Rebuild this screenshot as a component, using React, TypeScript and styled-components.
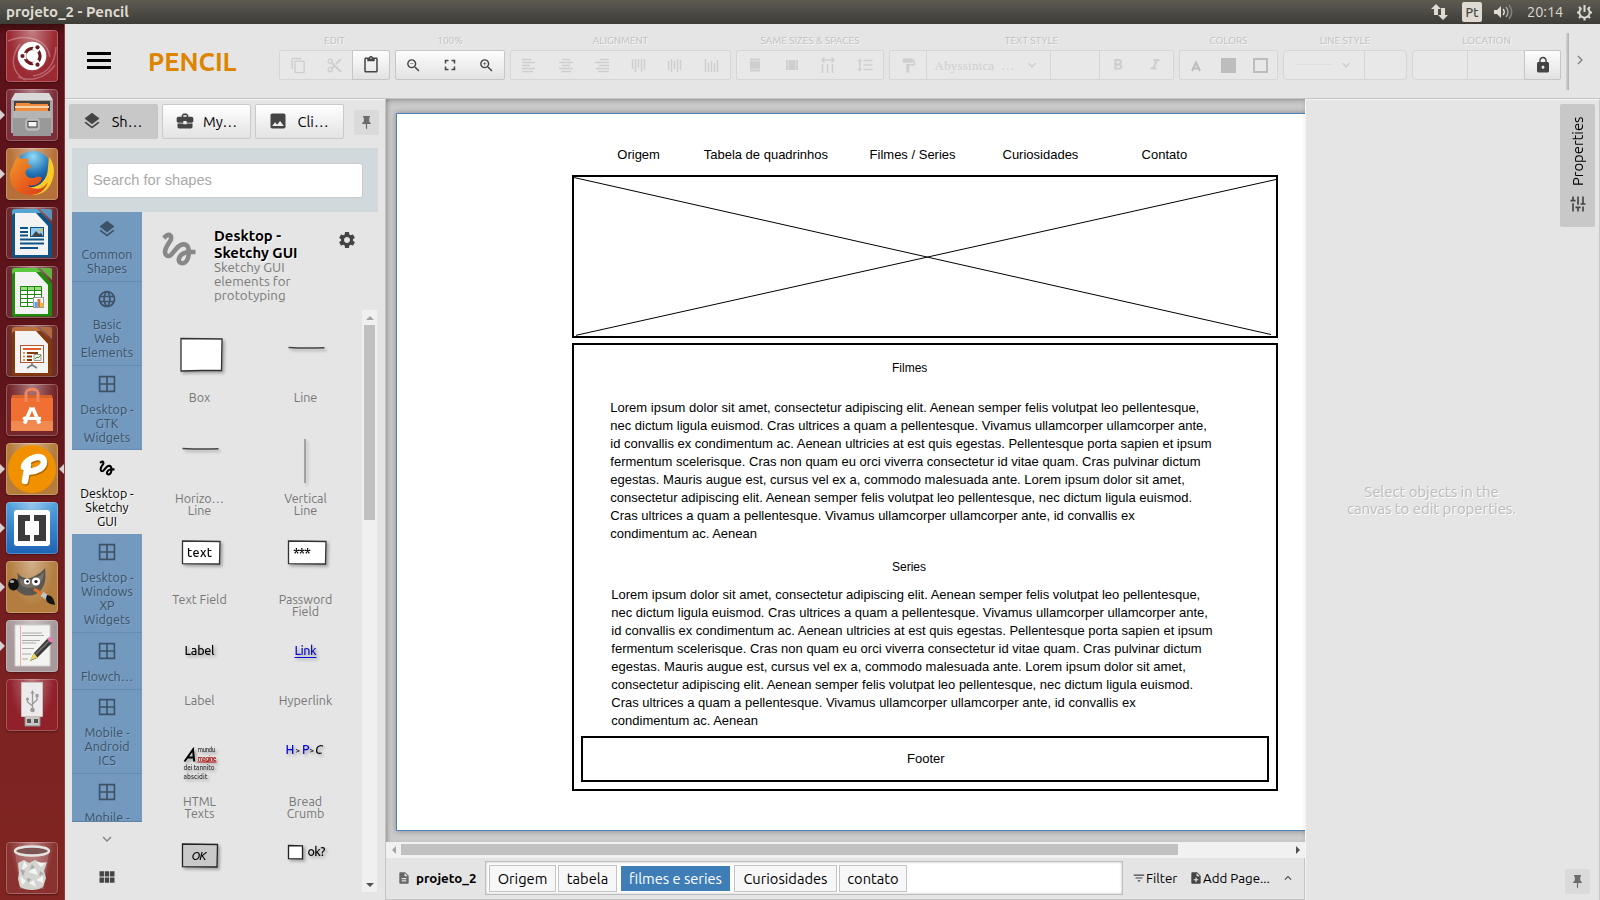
import React from 'react';
import styled, { createGlobalStyle, css } from 'styled-components';
import {
  MdBusinessCenter,
  MdChevronRight,
  MdContentCopy,
  MdContentCut,
  MdContentPaste,
  MdDescription,
  MdExpandLess,
  MdExpandMore,
  MdFilterList,
  MdFormatBold,
  MdFormatItalic,
  MdFormatLineSpacing,
  MdFormatPaint,
  MdFullscreen,
  MdGesture,
  MdLanguage,
  MdLayers,
  MdLock,
  MdNoteAdd,
  MdPhoto,
  MdSettings,
  MdTune,
  MdViewModule,
  MdZoomIn,
  MdZoomOut,
} from 'react-icons/md';

const UI = '"Ubuntu", "Noto Sans", "Open Sans", sans-serif';
const SANS = '"Liberation Sans", Arial, sans-serif';

const GlobalStyle = createGlobalStyle`
  * { box-sizing: border-box; }
  body { margin: 0; overflow: hidden; background: #e5e5e5; font-family: ${UI}; }
  svg { display: block; flex: none; }
`;

const Screen = styled.div`
  width: 1600px;
  height: 900px;
  display: flex;
  flex-direction: column;
  overflow: hidden;
`;

/* ---------- system bar ---------- */

const SystemBar = styled.header`
  height: 24px;
  flex: none;
  display: flex;
  align-items: center;
  justify-content: space-between;
  padding: 0 7px 0 6px;
  color: #dfdbd2;
  background: linear-gradient(#5d5a4c 0, #59574f 3px, #3d3c37 100%);
`;

const WindowTitle = styled.div`
  font-size: 15px;
  font-weight: 700;
  line-height: 24px;
`;

const Indicators = styled.div`
  display: flex;
  align-items: center;
`;

const Keyboard = styled.div`
  width: 20px;
  height: 20px;
  margin: 0 12px 0 14px;
  border-radius: 2px;
  background: #dfdbd2;
  color: #45443e;
  font-size: 12.5px;
  font-weight: 500;
  line-height: 21px;
  text-align: center;
`;

const Clock = styled.div`
  margin: 0 12px 0 13px;
  width: 37px;
  font-size: 14.5px;
  line-height: 24px;
`;

/* ---------- launcher ---------- */

const Desktop = styled.div`
  flex: 1;
  display: flex;
  min-height: 0;
`;

const Launcher = styled.nav`
  width: 65px;
  flex: none;
  display: flex;
  flex-direction: column;
  gap: 7px;
  padding: 6px 0 6px 6px;
  border-right: 1px solid #8d3a3c;
  background: linear-gradient(#3a0d10 0, #5c1218 10px, #5e141a 40%, #7c2222 75%, #802521 100%);
`;

const Tile = styled.div<{ $bg: string; $last?: boolean }>`
  position: relative;
  width: 52px;
  height: 52px;
  flex: none;
  border-radius: 4px;
  background: radial-gradient(ellipse at 50% 0, rgba(255, 255, 255, 0.4), rgba(255, 255, 255, 0) 62%), ${(p) => p.$bg};
  box-shadow: inset 0 0 0 1px rgba(255, 255, 255, 0.24), 0 1px 2px rgba(0, 0, 0, 0.35);
  ${(p) => p.$last && css`margin-top: auto;`}
`;

const RunningMark = styled.i<{ $right?: boolean }>`
  position: absolute;
  top: 21px;
  border: 5px solid transparent;
  ${(p) =>
    p.$right
      ? css`right: -6px; border-left: 0; border-right-color: #d8d0d0;`
      : css`left: -6px; border-right: 0; border-left-color: #d8d0d0;`}
`;

/* ---------- application header ---------- */

const AppWindow = styled.div`
  flex: 1;
  min-width: 0;
  display: flex;
  flex-direction: column;
  background: #e5e5e5;
`;

const AppHeader = styled.div`
  height: 75px;
  flex: none;
  display: flex;
  border-bottom: 1px solid #c3c3c3;
`;

const Burger = styled.button`
  width: 24px;
  height: 17px;
  margin: 28px 0 0 22px;
  padding: 0;
  border: 0;
  display: flex;
  flex-direction: column;
  justify-content: space-between;
  background: none;
  span { height: 3px; background: #000; }
`;

const Brand = styled.div`
  width: 168px;
  padding: 20px 0 0 37px;
  color: #dd8500;
  font-size: 25.6px;
  font-weight: 700;
  line-height: 36px;
`;

const Tools = styled.div`
  display: flex;
  gap: 5px;
  padding-top: 9px;
`;

const Tool = styled.section`
  display: flex;
  flex-direction: column;
`;

const ToolLabel = styled.div`
  height: 17px;
  color: #c0c0c0;
  font-size: 10.1px;
  line-height: 15px;
  text-align: center;
  text-shadow: 1px 1px 0 #f6f6f6;
`;

const ToolBox = styled.div<{ $active?: boolean; $w: number; $round?: boolean }>`
  display: flex;
  width: ${(p) => p.$w}px;
  height: 30px;
  border: 1px solid ${(p) => (p.$active ? '#c6c6c6' : '#d6d6d6')};
  border-radius: ${(p) => (p.$round ? 4 : 2)}px;
  background: ${(p) => (p.$active ? 'linear-gradient(#fdfdfd, #e2e2e2)' : '#e8e8e8')};
`;

const ToolCell = styled.div<{ $w?: number; $tone?: string; $raised?: boolean; $line?: boolean }>`
  flex: ${(p) => (p.$w ? 'none' : 1)};
  width: ${(p) => (p.$w ? p.$w + 'px' : 'auto')};
  display: flex;
  align-items: center;
  justify-content: center;
  color: ${(p) => p.$tone || '#cecece'};
  ${(p) => p.$line && css`border-right: 1px solid #d6d6d6;`}
  ${(p) =>
    p.$raised &&
    css`
      margin: -1px -1px -1px 0;
      border: 1px solid #c6c6c6;
      border-radius: 0 2px 2px 0;
      background: linear-gradient(#fdfdfd, #e2e2e2);
      color: #444;
    `}
`;

const FontName = styled.div`
  flex: 1;
  padding: 2px 0 0 8px;
  font-family: "Liberation Serif", serif;
  font-size: 13px;
  letter-spacing: 0.2px;
  white-space: pre;
`;

const ScrollEdge = styled.div`
  width: 3px;
  height: 57px;
  margin: 9px 0 0 5px;
  background: linear-gradient(90deg, #d4d4d4, #b0b0b0);
`;

const ScrollNext = styled.div`
  width: 24px;
  padding: 27px 0 0 2px;
  color: #888;
`;

/* ---------- left panel ---------- */

const Workspace = styled.div`
  flex: 1;
  min-height: 0;
  display: flex;
`;

const Shapes = styled.aside`
  width: 321px;
  flex: none;
  display: flex;
  flex-direction: column;
  border-top: 1px solid #f6f6f6;
  border-right: 1px solid #c4c4c4;
`;

const PanelTabs = styled.div`
  display: flex;
  align-items: flex-start;
  gap: 4px;
  height: 48px;
  padding: 4px 0 0 4px;
`;

const PanelTab = styled.button<{ $on?: boolean }>`
  width: 89px;
  height: 35px;
  display: flex;
  align-items: center;
  gap: 3px;
  padding: 0 0 1px 12px;
  border: 1px solid ${(p) => (p.$on ? '#c6c6c6' : '#cacaca')};
  border-radius: 2px;
  background: ${(p) => (p.$on ? '#c8c8c8' : 'linear-gradient(#fff, #e3e3e3)')};
  color: #444;
  span {
    width: 44px;
    color: #000;
    font: 14.67px ${UI};
    text-align: center;
  }
`;

const PinButton = styled.div<{ $x?: number }>`
  width: 25px;
  height: 25px;
  margin: ${(p) => (p.$x ? '6px 0 0 6px' : '0')};
  display: grid;
  place-items: center;
  border-radius: 2px;
  background: #dadada;
`;

const SearchBand = styled.div`
  height: 64px;
  margin: 0 7px;
  padding: 15px 15px 0;
  background: #d2d9dc;
`;

const SearchField = styled.div`
  height: 35px;
  padding-left: 5px;
  border: 1px solid #cbcbcb;
  border-radius: 3px;
  background: #fff;
  color: #aaa;
  font: 14.67px/33px ${SANS};
`;

const ShapeBrowser = styled.div`
  flex: 1;
  min-height: 0;
  display: flex;
  padding-left: 7px;
`;

const Collections = styled.div`
  width: 70px;
  flex: none;
  display: flex;
  flex-direction: column;
`;

const CollectionList = styled.div`
  height: 610px;
  flex: none;
  overflow: hidden;
  border-bottom: 1px solid #5f84a8;
  background: #7399bf;
`;

const CollectionItem = styled.div<{ $h: number; $pad: number; $on?: boolean }>`
  height: ${(p) => p.$h}px;
  padding-top: ${(p) => p.$pad}px;
  display: flex;
  flex-direction: column;
  align-items: center;
  gap: 8px;
  border-bottom: 1px solid ${(p) => (p.$on ? '#e5e5e5' : '#658cb3')};
  background: ${(p) => (p.$on ? '#e5e5e5' : 'transparent')};
  color: ${(p) => (p.$on ? '#000' : '#3d5266')};
  text-shadow: ${(p) => (p.$on ? '1px 1px 0 #fff' : '1px 1px 0 #83a5c6')};
`;

const CollectionName = styled.div`
  font-size: 12.5px;
  line-height: 14px;
  text-align: center;
  white-space: pre;
`;

const CollectionTools = styled.div`
  height: 78px;
  display: flex;
  flex-direction: column;
  align-items: center;
  gap: 19px;
  padding-top: 8px;
  color: #444;
`;

const Stencils = styled.div`
  flex: 1;
  display: flex;
  flex-direction: column;
`;

const StencilHeader = styled.div`
  height: 98px;
  display: flex;
  padding: 15px 0 0 15px;
`;

const StencilInfo = styled.div`
  width: 118px;
  margin: 0 5px 0 13px;
  h3 {
    margin: 0;
    font-size: 14.9px;
    font-weight: 700;
    line-height: 17px;
    text-shadow: 1px 1px 0 #fff;
    white-space: pre;
  }
  p {
    margin: 0;
    color: #7a7a7a;
    font-size: 13.33px;
    line-height: 14px;
    white-space: pre;
  }
`;

const SettingsIcon = styled(MdSettings)`
  margin-top: 3px;
  color: #444;
`;

const StencilBody = styled.div`
  height: 582px;
  display: flex;
`;

const StencilGrid = styled.div`
  width: 220px;
  padding: 21px 0 0 4px;
  display: grid;
  grid-template-columns: 106px 106px;
  grid-auto-rows: 101px;
  overflow: hidden;
`;

const Stencil = styled.figure`
  margin: 0;
  figcaption {
    margin-top: 5px;
    padding-left: 1px;
    color: #777;
    font-size: 12.5px;
    line-height: 12px;
    text-align: center;
    white-space: pre;
  }
`;

const StencilArt = styled.svg`
  filter: drop-shadow(2px 2px 1.5px rgba(0, 0, 0, 0.3));
  text {
    font-family: "Comic Sans MS", ${UI};
    font-weight: 500;
  }
`;

const VScroll = styled.div`
  width: 15px;
  display: flex;
  flex-direction: column;
  align-items: center;
  justify-content: space-between;
  background: #f0f0f0;
`;

const VThumb = styled.div`
  width: 11px;
  height: 195px;
  margin-bottom: auto;
  background: #c0c0c0;
`;

const ArrowSlot = styled.div`
  width: 15px;
  height: 15px;
  display: grid;
  place-items: center;
`;

/* ---------- canvas ---------- */

const Editor = styled.main`
  width: 919px;
  flex: none;
  display: flex;
  flex-direction: column;
`;

const Viewport = styled.div`
  position: relative;
  height: 743px;
  padding: 14px 0 0 10px;
  overflow: hidden;
  background: #cbcbcb;
  &::after {
    content: '';
    position: absolute;
    inset: 0;
    pointer-events: none;
    box-shadow: inset 0 4px 6px -3px rgba(0, 0, 0, 0.3), inset 4px 0 5px -3px rgba(0, 0, 0, 0.25);
  }
`;

const Page = styled.div`
  position: relative;
  width: 1000px;
  height: 718px;
  border: 1px solid #4c84ba;
  background: #fff;
  box-shadow: 0 0 6px rgba(0, 0, 0, 0.35);
  font-family: ${SANS};
  color: #000;
`;

const CanvasText = styled.div<{ $x: number; $y: number; $size?: number; $leading?: number }>`
  position: absolute;
  left: ${(p) => p.$x - 397}px;
  top: ${(p) => p.$y - 114}px;
  font-size: ${(p) => p.$size || 13}px;
  line-height: ${(p) => p.$leading || 18}px;
  white-space: pre;
`;

const Frame = styled.div<{ $x: number; $y: number; $w: number; $h: number }>`
  position: absolute;
  left: ${(p) => p.$x - 397}px;
  top: ${(p) => p.$y - 114}px;
  width: ${(p) => p.$w}px;
  height: ${(p) => p.$h}px;
  border: 2px solid #000;
`;

const HScroll = styled.div`
  height: 16px;
  display: flex;
  align-items: center;
  justify-content: space-between;
  padding-bottom: 1px;
  background: #f1f1f1;
`;

const HThumb = styled.div`
  width: 777px;
  height: 11px;
  margin-right: auto;
  background: #c1c1c1;
`;

const PageBar = styled.div`
  flex: 1;
  display: flex;
  align-items: center;
  padding: 0 0 1px 11px;
  border-right: 1px solid #c4c4c4;
  border-bottom: 1px solid #c4c4c4;
  background: #e4e4e4;
  color: #000;
`;

const DocumentName = styled.div`
  width: 69px;
  margin-left: 5px;
  font-size: 13.33px;
  font-weight: 700;
`;

const PageTabs = styled.div`
  width: 638px;
  height: 34px;
  display: flex;
  gap: 2px;
  padding: 3px;
  border: 1px solid #bdbdbd;
  background: #fff;
  box-shadow: inset 0 0 3px rgba(0, 0, 0, 0.25);
`;

const PageTab = styled.div<{ $w: number; $on?: boolean }>`
  width: ${(p) => p.$w}px;
  height: ${(p) => (p.$on ? 25 : 27)}px;
  margin: ${(p) => (p.$on ? '1px 2px 0' : '0')};
  border: 1px solid ${(p) => (p.$on ? '#3f7db7' : '#c4c4c4')};
  background: ${(p) => (p.$on ? '#3f7db7' : '#f7f7f7')};
  color: ${(p) => (p.$on ? '#fff' : '#000')};
  font-size: 14.67px;
  line-height: ${(p) => (p.$on ? 23 : 25)}px;
  text-align: center;
  white-space: nowrap;
`;

const PageAction = styled.div<{ $w: number; $left: number }>`
  width: ${(p) => p.$w}px;
  margin-left: ${(p) => p.$left}px;
  display: flex;
  align-items: center;
  font-size: 13.33px;
  white-space: nowrap;
  svg { color: #444; }
`;

/* ---------- properties ---------- */

const Properties = styled.aside`
  flex: 1;
  display: flex;
  justify-content: space-between;
  border-top: 1px solid #f6f6f6;
  border-left: 1px solid #f4f4f4;
  border-right: 1px solid #c8c8c8;
`;

const EmptyHint = styled.p`
  width: 251px;
  margin: 0;
  padding-top: 383px;
  color: #bcbcbc;
  font-size: 14.9px;
  line-height: 17px;
  text-align: center;
  text-shadow: 1px 1px 0 #fff;
  white-space: pre;
`;

const PropertiesRail = styled.div`
  width: 35px;
  margin: 4px 4px 6px 0;
  display: flex;
  flex-direction: column;
  align-items: center;
  justify-content: space-between;
`;

const PropertiesTab = styled.div`
  width: 35px;
  height: 123px;
  display: flex;
  flex-direction: column;
  align-items: center;
  gap: 8px;
  padding-top: 11px;
  border-radius: 2px;
  background: #c8c8c8;
  color: #444;
  span {
    height: 71px;
    writing-mode: vertical-rl;
    transform: rotate(180deg);
    color: #000;
    font-size: 14.8px;
    line-height: 20px;
    white-space: nowrap;
  }
  svg { transform: rotate(-90deg); }
`;

/* ---------- drawings ---------- */

const Pin = () => (
  <svg width="11" height="15" viewBox="0 0 11 15">
    <path d="M2 1h7v1.4H8.2V6.5L9.8 8v1H6.1v4.3L5.5 14.4 4.9 13.3V9H1.2V8L2.8 6.5V2.4H2z" fill="#6c6c6c" />
  </svg>
);

const Windows = () => (
  <svg width="20" height="20" viewBox="0 0 20 20" fill="none" stroke="currentColor" strokeWidth="1.6">
    <path d="M2.6 2.6h14.8v14.8H2.6zM10 2.6v14.8M2.6 10h14.8" />
  </svg>
);

const Triangle = ({ d, tone = '#505050' }: { d: string; tone?: string }) => (
  <svg width="8" height="8" viewBox="0 0 8 8">
    <path d={d} fill={tone} />
  </svg>
);

const Bars = ({ d, w = 1.4 }: { d: string; w?: number }) => (
  <svg width="16" height="16" viewBox="0 0 16 16" fill="none" stroke="currentColor" strokeWidth={w}>
    <path d={d} />
  </svg>
);

const alignments = [
  'M1 2.500h9M1 5.500h13M1 8.500h8M1 11.500h13M1 14.500h11',
  'M4 2.500h8M1 5.500h14M4 8.500h8M1 11.500h14M3 14.500h10',
  'M6 2.500h9M1 5.500h14M5 8.500h10M2 11.500h13M4 14.500h11',
  'M1.5 2v10M4.500 2v13M7.500 2v9M10.500 2v13M13.500 2v11',
  'M1.500 4v9M4.500 2v13M7.500 4v8M10.500 2v13M13.500 3v10',
  'M1.500 2v13M4.500 6v9M7.500 4v11M10.500 6v9M13.500 3v12',
];

const sheet = (dark: string, mid: string, inner: React.ReactNode) => (
  <svg width="52" height="52" viewBox="0 0 52 52">
    <path d="M9 2h22l15 15v32a1.500 1.500 0 0 1-1.500 1.500h-34A3 3 0 0 1 6 47V5a3 3 0 0 1 3-3z" fill={dark} />
    <path d="M6 8V5a3 3 0 0 1 3-3h22l4 4H9z" fill={mid} />
    <path d="M34 2h10a2 2 0 0 1 2 2v10z" fill={mid} opacity=".85" />
    <path d="M9 6h21l12 13v29H9z" fill="#f3f3f3" />
    {inner}
  </svg>
);

const launcherIcons: { bg: string; run?: boolean; focus?: boolean; art: React.ReactNode }[] = [
  {
    bg: '#9c2a33',
    art: (
      <svg width="52" height="52" viewBox="0 0 52 52">
        <g fill="none" stroke="#fff" strokeOpacity=".28" strokeWidth="1.500">
          <path d="M2 11C20 3 41 9 44 27M50 17c-1 16-8 27-23 29M19 50C5 42 4 27 14 14M12 47c16 6 29-1 37-12" />
        </g>
        <circle cx="26" cy="26" r="14.300" fill="#fff" />
        <circle cx="26.500" cy="26" r="7.600" fill="none" stroke="#6e1a1f" strokeWidth="3.200" />
        <path d="M20.500 26h-5M29 21l3-5M29 31l3 5" stroke="#fff" strokeWidth="6.500" />
        <g fill="#6e1a1f">
          <circle cx="16.500" cy="26" r="2.100" />
          <circle cx="31.500" cy="17.300" r="2.100" />
          <circle cx="31.500" cy="34.700" r="2.100" />
        </g>
      </svg>
    ),
  },
  {
    bg: '#7c2f3a',
    run: true,
    art: (
      <svg width="52" height="52" viewBox="0 0 52 52">
        <path d="M9 4h34l4 7v33H5V11z" fill="#d9d9d9" />
        <path d="M5 11h42v33H5z" fill="#a9a9a9" />
        <path d="M8 12h36v10H8z" fill="#46433f" />
        <path d="M10 14h13l2 1h17v7H9z" fill="#f08a3c" />
        <path d="M9 17h34v2H9z" fill="#fcd3a8" />
        <path d="M7 22h38v25H7z" fill="#999" />
        <path d="M7 22h38v7H7z" fill="#b5b5b5" />
        <rect x="20" y="30" width="13" height="11" rx="2" fill="#aaa" stroke="#ccc" />
        <rect x="22" y="32.500" width="9" height="5.500" fill="#f4f4f4" stroke="#444" />
      </svg>
    ),
  },
  {
    bg: '#b6703a',
    run: true,
    art: (
      <svg width="52" height="52" viewBox="0 0 52 52">
        <defs>
          <radialGradient id="globe" cx=".5" cy=".15" r=".9">
            <stop offset="0" stopColor="#8edbf5" />
            <stop offset=".5" stopColor="#2373b5" />
            <stop offset="1" stopColor="#0d2c66" />
          </radialGradient>
          <linearGradient id="fox" x1="0" y1="0" x2="1" y2="1">
            <stop offset="0" stopColor="#f39a2b" />
            <stop offset=".6" stopColor="#e65b1c" />
            <stop offset="1" stopColor="#d4381a" />
          </linearGradient>
        </defs>
        <circle cx="27" cy="22" r="19" fill="url(#globe)" />
        <path d="M43 9c5 6 6 14 4 21C44 41 37 47 26 47l-6-8c13 2 22-7 22-20z" fill="#fbc928" />
        <path d="M12 8c1 2 3 3 5 3 3-1 5 0 6 1-2 1-2 4 0 5 2 0 3 0 2 2l-5 3c-2 5 2 9 8 8 3-1 5-2 8 0-2 7-9 9-14 7 6 6 15 5 20-3-3 9-10 13-18 13C12 47 4 39 4 28c0-7 3-9 4-13 1-3 3-5 4-7z" fill="url(#fox)" />
      </svg>
    ),
  },
  {
    bg: '#6b2a30',
    art: sheet('#0d5486', '#55a5d2', (
      <g>
        <path d="M14 21h8M14 25h8M14 28.500h8M14 32.500h24M14 36.500h24M14 41h18" stroke="#0d5486" strokeWidth="2" />
        <rect x="24.500" y="20.500" width="13" height="9" fill="#8ecbf0" stroke="#0d5486" />
        <path d="M26 29l4-5 3 3 2-1 2 3z" fill="#444" />
        <circle cx="35" cy="23" r="1.500" fill="#ffb52b" />
      </g>
    )),
  },
  {
    bg: '#6b2a30',
    art: sheet('#1f8a0e', '#5cc93f', (
      <g>
        <path d="M14 20h22v21H14z" fill="#fff" />
        <path d="M14 20h22v4H14z" fill="#9be07e" />
        <path d="M14.500 20.500h21v20h-21zM14 24.500h22M14 28.500h22M14 32.500h22M14 36.500h22M21.500 20v21M28.500 20v21" stroke="#1f8a0e" fill="none" />
        <rect x="27.500" y="31.500" width="10" height="10" fill="#fff" stroke="#999" />
        <path d="M28.500 36h3v5h-3z" fill="#45a4f5" />
        <path d="M31.500 33h3v8h-3z" fill="#e0742c" />
        <path d="M34.500 37h3v4h-3z" fill="#f4b631" />
      </g>
    )),
  },
  {
    bg: '#6f2d2a',
    art: sheet('#83380c', '#bb7140', (
      <g>
        <rect x="14.500" y="20.500" width="23" height="17" fill="#fff" stroke="#b4552a" />
        <path d="M17 24h18" stroke="#e55b2c" strokeWidth="2" />
        <path d="M17 28h2M17 31.500h2M17 35h2" stroke="#e98a62" strokeWidth="2" />
        <path d="M21 28h11M21 31.500h5M21 35h5" stroke="#83380c" strokeWidth="2" />
        <path d="M28 29.500h7v6h-7z" fill="#eee" stroke="#999" />
        <path d="M29 34l2-2 1 1 3-3" stroke="#3d9c30" fill="none" />
        <path d="M26 38v2l-5 3M26 40l5 3" stroke="#777" strokeWidth="1.500" fill="none" />
      </g>
    )),
  },
  {
    bg: '#74262b',
    art: (
      <svg width="52" height="52" viewBox="0 0 52 52">
        <path d="M6 11h40l1 6H5z" fill="#d9622b" />
        <path d="M5 14h42v33H5z" fill="#ef7032" />
        <path d="M5 37h42v10H5z" fill="#f18a50" />
        <path d="M20 18V9c0-5 12-5 12 0v9" fill="none" stroke="#f0875c" strokeWidth="3" />
        <g stroke="#fff" fill="none">
          <path d="M18.500 39.500l7-16M33.500 39.500l-7-16" strokeWidth="3.600" />
          <path d="M18 34.500h17" strokeWidth="3.200" />
        </g>
        <circle cx="18.500" cy="34.500" r="2" fill="#fff" />
      </svg>
    ),
  },
  {
    bg: '#b57c3c',
    run: true,
    focus: true,
    art: (
      <svg width="52" height="52" viewBox="0 0 52 52">
        <circle cx="26" cy="26" r="24" fill="#f29100" />
        <g fill="none" strokeWidth="6.500" strokeLinecap="round" strokeLinejoin="round">
          <path d="M22 22c-1.500 6-2 10-3 16M18 24c1-8 19-15 20-5 0 6-8 9-14 9.500" stroke="#7a4c0b" strokeOpacity=".55" transform="translate(1 1.500)" />
          <path d="M22 22c-1.500 6-2 10-3 16M18 24c1-8 19-15 20-5 0 6-8 9-14 9.500" stroke="#fff" />
        </g>
      </svg>
    ),
  },
  {
    bg: 'linear-gradient(#54a3dd, #1d63b5)',
    run: true,
    art: (
      <svg width="52" height="52" viewBox="0 0 52 52">
        <rect x="8" y="8" width="36" height="36" rx="3" fill="#fff" />
        <path d="M12 13h12v6h-5v14h5v6H12zM40 13H28v6h5v14h-5v6h12z" fill="#3c3c3c" />
      </svg>
    ),
  },
  {
    bg: '#b37d3f',
    run: true,
    art: (
      <svg width="52" height="52" viewBox="0 0 52 52">
        <path d="M11 11c3 5 8 7 13 6 6-2 12-6 15-10 2 12-1 22-9 26-9 4-18 0-22-8 3-4 5-8 3-14z" fill="#5b5650" />
        <path d="M14 18c8 3 18 0 24-7-1 10-6 16-15 16-6 0-10-4-9-9z" fill="#77726a" />
        <ellipse cx="7.500" cy="23.500" rx="5.300" ry="6" fill="#111" />
        <ellipse cx="6" cy="20.500" rx="2.200" ry="1.600" fill="#aaa" />
        <circle cx="21" cy="20.500" r="3" fill="#fff" />
        <circle cx="30" cy="20.500" r="4" fill="#fff" />
        <circle cx="21.500" cy="20.500" r="1.300" fill="#111" />
        <circle cx="30" cy="20.500" r="1.600" fill="#111" />
        <path d="M28 28l13 8" stroke="#e2752b" strokeWidth="3" />
        <path d="M36 33l6 4" stroke="#bfc6cc" strokeWidth="5" />
        <path d="M41 34c5 0 7 4 8 10-5-1-9-2-9-7z" fill="#151515" />
      </svg>
    ),
  },
  {
    bg: '#a8999c',
    run: true,
    art: (
      <svg width="52" height="52" viewBox="0 0 52 52">
        <path d="M9 5h35v41H9z" fill="#f3f3f1" stroke="#cfcfcf" />
        <path d="M14.500 6v40" stroke="#f1aaaa" />
        <path d="M16 13h20M16 15.500h22M16 20.500h18M16 23h14M16 28.500h12M16 34h9M16 39h6" stroke="#a9a9a9" />
        <path d="M28 33L42 18l4.500 4.500L31 38l-7 3z" fill="#3a3a3a" />
        <path d="M30 34L44 20" stroke="#777" strokeWidth="1.500" />
        <path d="M41 19l2.500-2.500 4 4L45 23z" fill="#e77fb5" />
        <path d="M28 33l3.500 4.500-7.500 3z" fill="#ead45a" />
      </svg>
    ),
  },
  {
    bg: '#90202a',
    art: (
      <svg width="52" height="52" viewBox="0 0 52 52">
        <path d="M19 36h15v11H19z" fill="#c9c6c4" stroke="#888" />
        <path d="M21 40h4v4h-4zM28 40h4v4h-4z" fill="#555" />
        <path d="M15.500 3.500h21v34h-21z" fill="#eceaea" stroke="#c4c1c0" />
        <g stroke="#999" fill="none" strokeWidth="1.300">
          <path d="M26.500 13v17M26.500 27l-5-4v-3M26.500 25l4.500-4v-4" />
        </g>
        <g fill="#999">
          <circle cx="26.500" cy="31" r="2.300" />
          <path d="M24.500 14.500l2-3.500 2 3.500zM29.500 15h3v3h-3z" />
          <circle cx="21.500" cy="20" r="1.500" />
        </g>
      </svg>
    ),
  },
];

const Trash = () => (
  <svg width="52" height="52" viewBox="0 0 52 52">
    <path d="M9 10h34l-5 37H14z" fill="#fff" fillOpacity=".14" />
    <path d="M12 21l6-3 5 3 6-3 6 3 6-1-3 9 2 7-3 9c-5 4-17 4-23 0l-2-8 1-6z" fill="#d4d4d0" />
    <path d="M18 19l4 5-6 4zM30 20l5 5 4-4zM22 30l7-4 3 7zM14 34l6 5-4 4zM30 38l7-4v7zM23 41l5-3 2 7z" fill="#f4f4f2" />
    <path d="M14 27l5 2-2 5zM26 22l3 4-5 1zM34 29l4 3-5 2zM21 36l4 1-3 4z" fill="#a9a9a5" />
    <ellipse cx="26" cy="9" rx="17" ry="4.500" fill="#7d5552" stroke="#e4e4e0" strokeWidth="2.600" />
  </svg>
);

/* ---------- data ---------- */

const collections = [
  { h: 70, pad: 7, icon: <MdLayers size={20} />, name: 'Common\nShapes' },
  { h: 84, pad: 7, icon: <MdLanguage size={20} />, name: 'Basic\nWeb\nElements' },
  { h: 84, pad: 8, icon: <Windows />, name: 'Desktop -\nGTK\nWidgets' },
  { h: 84, pad: 8, icon: <MdGesture size={20} />, name: 'Desktop -\nSketchy\nGUI', on: true },
  { h: 99, pad: 8, icon: <Windows />, name: 'Desktop -\nWindows\nXP\nWidgets' },
  { h: 57, pad: 8, icon: <Windows />, name: 'Flowch…' },
  { h: 84, pad: 7, icon: <Windows />, name: 'Mobile -\nAndroid\nICS' },
  { h: 84, pad: 8, icon: <Windows />, name: 'Mobile -' },
];

const field = 'M36.500 8l37.500.5-.5 22.500-37-.3z';

const stencils: { name: string; art: React.ReactNode }[] = [
  { name: 'Box', art: <path d="M35 7.500l41 .5-.5 31.500L55 39.500l-20 .5z" fill="#fff" stroke="#333" strokeWidth="1.300" /> },
  { name: 'Line', art: <path d="M36.500 16.500q18 1 36 .2" fill="none" stroke="#444" strokeWidth="1.500" /> },
  { name: 'Horizo…\nLine', art: <path d="M36.500 16.500q18 1 36 .2" fill="none" stroke="#444" strokeWidth="1.500" /> },
  { name: 'Vertical\nLine', art: <path d="M53 7v44" stroke="#666" /> },
  {
    name: 'Text Field',
    art: (
      <>
        <path d={field} fill="#fff" stroke="#333" strokeWidth="1.300" />
        <text x="41" y="24" fontSize="12.500" textLength="25">text</text>
      </>
    ),
  },
  {
    name: 'Password\nField',
    art: (
      <>
        <path d={field} fill="#fff" stroke="#333" strokeWidth="1.300" />
        <text x="41" y="25" fontSize="14" textLength="18">***</text>
      </>
    ),
  },
  { name: 'Label', art: <text x="38.500" y="21" fontSize="12.500" textLength="30">Label</text> },
  {
    name: 'Hyperlink',
    art: (
      <>
        <text x="42.500" y="21" fontSize="12.500" fill="#0a0ac8" textLength="22">Link</text>
        <path d="M42.500 23.500h22" stroke="#0a0ae0" />
      </>
    ),
  },
  {
    name: 'HTML\nTexts',
    art: (
      <>
        <path d="M38.500 26.500L47 14.500l1.200 12M41 22.500h7" fill="none" stroke="#000" strokeWidth="2" />
        <text x="51.500" y="17" fontSize="6.500" fill="#444" textLength="18">mundu</text>
        <text x="51.500" y="25.500" fontSize="6.500" fill="#a00" textLength="19">magine</text>
        <path d="M51.500 27h19" stroke="#b00" />
        <text x="37.500" y="34.500" fontSize="6.500" fill="#333" textLength="31">dei tannito</text>
        <text x="37.500" y="43.500" fontSize="6.500" fill="#333" textLength="24">abscidit</text>
      </>
    ),
  },
  {
    name: 'Bread\nCrumb',
    art: (
      <>
        <text x="33.500" y="19" fontSize="12.500" fill="#00d">H</text>
        <text x="43.500" y="18" fontSize="8">&gt;</text>
        <text x="50" y="19" fontSize="12.500" fill="#00d">P</text>
        <text x="57.500" y="18" fontSize="8">&gt;</text>
        <text x="63" y="19" fontSize="12.500" fontStyle="italic">C</text>
      </>
    ),
  },
  {
    name: '',
    art: (
      <>
        <path d="M36.500 8l35 .5-.5 22.500-34.500-.3z" fill="#c9c9c9" stroke="#222" strokeWidth="1.300" />
        <text x="45.500" y="24" fontSize="11.500" fontStyle="italic" textLength="15">OK</text>
      </>
    ),
  },
  {
    name: '',
    art: (
      <>
        <path d="M36.500 9.500l14 .3v13l-14-.2z" fill="#fff" stroke="#222" strokeWidth="1.300" />
        <text x="55.500" y="20" fontSize="12.500" textLength="18">ok?</text>
      </>
    ),
  },
];

const loremLines = [
  'Lorem ipsum dolor sit amet, consectetur adipiscing elit. Aenean semper felis volutpat leo pellentesque,',
  'nec dictum ligula euismod. Cras ultrices a quam a pellentesque. Vivamus ullamcorper ullamcorper ante,',
  'id convallis ex condimentum ac. Aenean ultricies at est quis egestas. Pellentesque porta sapien et ipsum',
  'fermentum scelerisque. Cras non quam eu orci viverra consectetur id vitae quam. Cras pulvinar dictum',
  'egestas. Mauris augue est, cursus vel ex a, commodo malesuada ante. Lorem ipsum dolor sit amet,',
  'consectetur adipiscing elit. Aenean semper felis volutpat leo pellentesque, nec dictum ligula euismod.',
  'Cras ultrices a quam a pellentesque. Vivamus ullamcorper ullamcorper ante, id convallis ex',
  'condimentum ac. Aenean',
].join('\n');

/* ---------- regions ---------- */

const TopBar = () => (
  <SystemBar>
    <WindowTitle>projeto_2 - Pencil</WindowTitle>
    <Indicators>
      <svg width="17" height="16" viewBox="0 0 17 16" fill="#dfdbd2">
        <path d="M5 0l5 5H7v6H3V5H0zM12 16l-5-5h3V4h4v7h3z" />
      </svg>
      <Keyboard>Pt</Keyboard>
      <svg width="20" height="16" viewBox="0 0 20 16" fill="none">
        <path d="M0 6h3l4-4v12l-4-4H0z" fill="#dfdbd2" />
        <path d="M9 5q2.500 3 0 6" stroke="#dfdbd2" strokeWidth="1.500" />
        <path d="M12 3q4 5 0 10" stroke="#aaa79f" strokeWidth="1.500" />
        <path d="M15 1q5.500 7 0 14" stroke="#84827a" strokeWidth="1.500" />
      </svg>
      <Clock>20:14</Clock>
      <svg width="17" height="17" viewBox="0 0 17 17" fill="none" stroke="#dfdbd2">
        <path d="M5.500 4.200a5.200 5.200 0 1 0 6 0" strokeWidth="2" />
        <path d="M8.500 1v7M1 8.500h2M14 8.500h2M3 3l1.500 1.500M14 3l-1.500 1.500M3 14l1.500-1.500M14 14l-1.500-1.500M8.500 14v2.500" strokeWidth="2" />
      </svg>
    </Indicators>
  </SystemBar>
);

const Toolbar = () => (
  <AppHeader>
    <Burger aria-label="menu"><span /><span /><span /></Burger>
    <Brand>PENCIL</Brand>
    <Tools>
      <Tool>
        <ToolLabel>EDIT</ToolLabel>
        <ToolBox $w={111}>
          <ToolCell><MdContentCopy size={17} /></ToolCell>
          <ToolCell><MdContentCut size={17} /></ToolCell>
          <ToolCell $raised $w={38}><MdContentPaste size={18} /></ToolCell>
        </ToolBox>
      </Tool>
      <Tool>
        <ToolLabel>100%</ToolLabel>
        <ToolBox $w={110} $active>
          <ToolCell $tone="#444" $w={35}><MdZoomOut size={17} /></ToolCell>
          <ToolCell $tone="#444"><MdFullscreen size={18} /></ToolCell>
          <ToolCell $tone="#444" $w={35}><MdZoomIn size={17} /></ToolCell>
        </ToolBox>
      </Tool>
      <Tool>
        <ToolLabel>ALIGNMENT</ToolLabel>
        <ToolBox $w={221}>
          {alignments.map((d) => (
            <ToolCell key={d}><Bars d={d} /></ToolCell>
          ))}
        </ToolBox>
      </Tool>
      <Tool>
        <ToolLabel>SAME SIZES &amp; SPACES</ToolLabel>
        <ToolBox $w={148}>
          <ToolCell>
            <svg width="16" height="16" viewBox="0 0 16 16" fill="currentColor"><path d="M3 1.500h10v1.500H3zM3 4.500h10v7H3zM3 13h10v1.500H3z" /><path d="M3 3h10v10H3z" opacity=".5" /></svg>
          </ToolCell>
          <ToolCell>
            <svg width="16" height="16" viewBox="0 0 16 16" fill="currentColor"><path d="M2 3h1.500v10H2zM5 3h6v10H5zM12.500 3H14v10h-1.500z" /><path d="M2 3h12v10H2z" opacity=".5" /></svg>
          </ToolCell>
          <ToolCell><Bars d="M2.500 7v9M7.500 7v9M12.500 7v9M2 3h12M4.500 .5L2 3l2.500 2.500M11.500 .5L14 3l-2.500 2.500" /></ToolCell>
          <ToolCell><MdFormatLineSpacing size={18} /></ToolCell>
        </ToolBox>
      </Tool>
      <Tool>
        <ToolLabel>TEXT STYLE</ToolLabel>
        <ToolBox $w={285}>
          <ToolCell $w={37} $line><MdFormatPaint size={17} /></ToolCell>
          <ToolCell $w={124} $line>
            <FontName>Abyssinica  …</FontName>
            <ToolCell $w={36}><MdExpandMore size={16} /></ToolCell>
          </ToolCell>
          <ToolCell $w={49} $line />
          <ToolCell><MdFormatBold size={18} /></ToolCell>
          <ToolCell><MdFormatItalic size={18} /></ToolCell>
        </ToolBox>
      </Tool>
      <Tool>
        <ToolLabel>COLORS</ToolLabel>
        <ToolBox $w={99}>
          <ToolCell $tone="#bdbdbd">
            <svg width="12" height="14" viewBox="0 0 12 14" fill="none" stroke="currentColor" strokeWidth="1.900"><path d="M2 13L6 4.500 10 13M3.500 10.500h5" /></svg>
          </ToolCell>
          <ToolCell $tone="#bdbdbd">
            <svg width="15" height="15"><path d="M0 0h15v15H0z" fill="currentColor" /></svg>
          </ToolCell>
          <ToolCell $tone="#bdbdbd">
            <svg width="15" height="15"><path d="M1 1h13v13H1z" fill="none" stroke="currentColor" strokeWidth="2" /></svg>
          </ToolCell>
        </ToolBox>
      </Tool>
      <Tool>
        <ToolLabel>LINE STYLE</ToolLabel>
        <ToolBox $w={124} $round>
          <ToolCell $w={81} $line>
            <svg width="43" height="8"><path d="M0 3.500h37" stroke="#dedede" /></svg>
            <MdExpandMore size={16} />
          </ToolCell>
          <ToolCell />
        </ToolBox>
      </Tool>
      <Tool>
        <ToolLabel>LOCATION</ToolLabel>
        <ToolBox $w={149} $round>
          <ToolCell $w={55} $line />
          <ToolCell />
          <ToolCell $raised $w={37}><MdLock size={18} /></ToolCell>
        </ToolBox>
      </Tool>
    </Tools>
    <ScrollEdge />
    <ScrollNext><MdChevronRight size={18} /></ScrollNext>
  </AppHeader>
);

const ShapePanel = () => (
  <Shapes>
    <PanelTabs>
      <PanelTab $on><MdLayers size={20} /><span>Sh…</span></PanelTab>
      <PanelTab><MdBusinessCenter size={20} /><span>My…</span></PanelTab>
      <PanelTab><MdPhoto size={20} /><span>Cli…</span></PanelTab>
      <PinButton $x={1}><Pin /></PinButton>
    </PanelTabs>
    <SearchBand>
      <SearchField>Search for shapes</SearchField>
    </SearchBand>
    <ShapeBrowser>
      <Collections>
        <CollectionList>
          {collections.map((c, i) => (
            <CollectionItem key={i} $h={c.h} $pad={c.pad} $on={c.on}>
              {c.icon}
              <CollectionName>{c.name}</CollectionName>
            </CollectionItem>
          ))}
        </CollectionList>
        <CollectionTools>
          <MdExpandMore size={18} color="#888" />
          <MdViewModule size={20} />
        </CollectionTools>
      </Collections>
      <Stencils>
        <StencilHeader>
          <MdGesture size={44} color="#888" />
          <StencilInfo>
            <h3>{'Desktop -\nSketchy GUI'}</h3>
            <p>{'Sketchy GUI\nelements for\nprototyping'}</p>
          </StencilInfo>
          <SettingsIcon size={20} />
        </StencilHeader>
        <StencilBody>
          <StencilGrid>
            {stencils.map((s, i) => (
              <Stencil key={i}>
                <StencilArt width="106" height="55" viewBox="0 0 106 55">{s.art}</StencilArt>
                <figcaption>{s.name}</figcaption>
              </Stencil>
            ))}
          </StencilGrid>
          <VScroll>
            <ArrowSlot><Triangle d="M4 2l4 4H0z" tone="#a3a3a3" /></ArrowSlot>
            <VThumb />
            <ArrowSlot><Triangle d="M0 2h8L4 6z" /></ArrowSlot>
          </VScroll>
        </StencilBody>
      </Stencils>
    </ShapeBrowser>
  </Shapes>
);

const CanvasArea = () => (
  <Editor>
    <Viewport>
      <Page>
        <CanvasText $x={617.3} $y={146}>Origem</CanvasText>
        <CanvasText $x={703.7} $y={146}>Tabela de quadrinhos</CanvasText>
        <CanvasText $x={869.6} $y={146}>Filmes / Series</CanvasText>
        <CanvasText $x={1002.5} $y={146}>Curiosidades</CanvasText>
        <CanvasText $x={1141.6} $y={146}>Contato</CanvasText>
        <Frame $x={572} $y={175} $w={706} $h={163}>
          <svg width="702" height="159" viewBox="0 0 702 159" stroke="#000" strokeWidth="1">
            <path d="M0 .5L697 157.500M2 158.300L702 2.500" />
          </svg>
        </Frame>
        <Frame $x={572} $y={343} $w={706} $h={448} />
        <CanvasText $x={892} $y={359} $size={12}>Filmes</CanvasText>
        <CanvasText $x={610.3} $y={399}>{loremLines}</CanvasText>
        <CanvasText $x={892} $y={558} $size={12}>Series</CanvasText>
        <CanvasText $x={611.3} $y={586}>{loremLines}</CanvasText>
        <Frame $x={581} $y={736} $w={688} $h={46} />
        <CanvasText $x={907} $y={750}>Footer</CanvasText>
      </Page>
    </Viewport>
    <HScroll>
      <ArrowSlot><Triangle d="M6 0v8L2 4z" tone="#a3a3a3" /></ArrowSlot>
      <HThumb />
      <ArrowSlot><Triangle d="M2 0v8l4-4z" /></ArrowSlot>
    </HScroll>
    <PageBar>
      <MdDescription size={14} color="#666" />
      <DocumentName>projeto_2</DocumentName>
      <PageTabs>
        <PageTab $w={67}>Origem</PageTab>
        <PageTab $w={59}>tabela</PageTab>
        <PageTab $w={109} $on>filmes e series</PageTab>
        <PageTab $w={103}>Curiosidades</PageTab>
        <PageTab $w={68}>contato</PageTab>
      </PageTabs>
      <PageAction $w={48} $left={9}><MdFilterList size={14} />Filter</PageAction>
      <PageAction $w={82} $left={9}><MdNoteAdd size={14} />Add Page...</PageAction>
      <PageAction $w={16} $left={10}><MdExpandLess size={14} /></PageAction>
    </PageBar>
  </Editor>
);

const PropertiesPanel = () => (
  <Properties>
    <EmptyHint>{'Select objects in the\ncanvas to edit properties.'}</EmptyHint>
    <PropertiesRail>
      <PropertiesTab>
        <span>Properties</span>
        <MdTune size={20} />
      </PropertiesTab>
      <PinButton><Pin /></PinButton>
    </PropertiesRail>
  </Properties>
);

export default function App() {
  return (
    <Screen>
      <GlobalStyle />
      <TopBar />
      <Desktop>
        <Launcher>
          {launcherIcons.map((l, i) => (
            <Tile key={i} $bg={l.bg}>
              {l.art}
              {l.run && <RunningMark />}
              {l.focus && <RunningMark $right />}
            </Tile>
          ))}
          <Tile $bg="#8a3230" $last><Trash /></Tile>
        </Launcher>
        <AppWindow>
          <Toolbar />
          <Workspace>
            <ShapePanel />
            <CanvasArea />
            <PropertiesPanel />
          </Workspace>
        </AppWindow>
      </Desktop>
    </Screen>
  );
}
